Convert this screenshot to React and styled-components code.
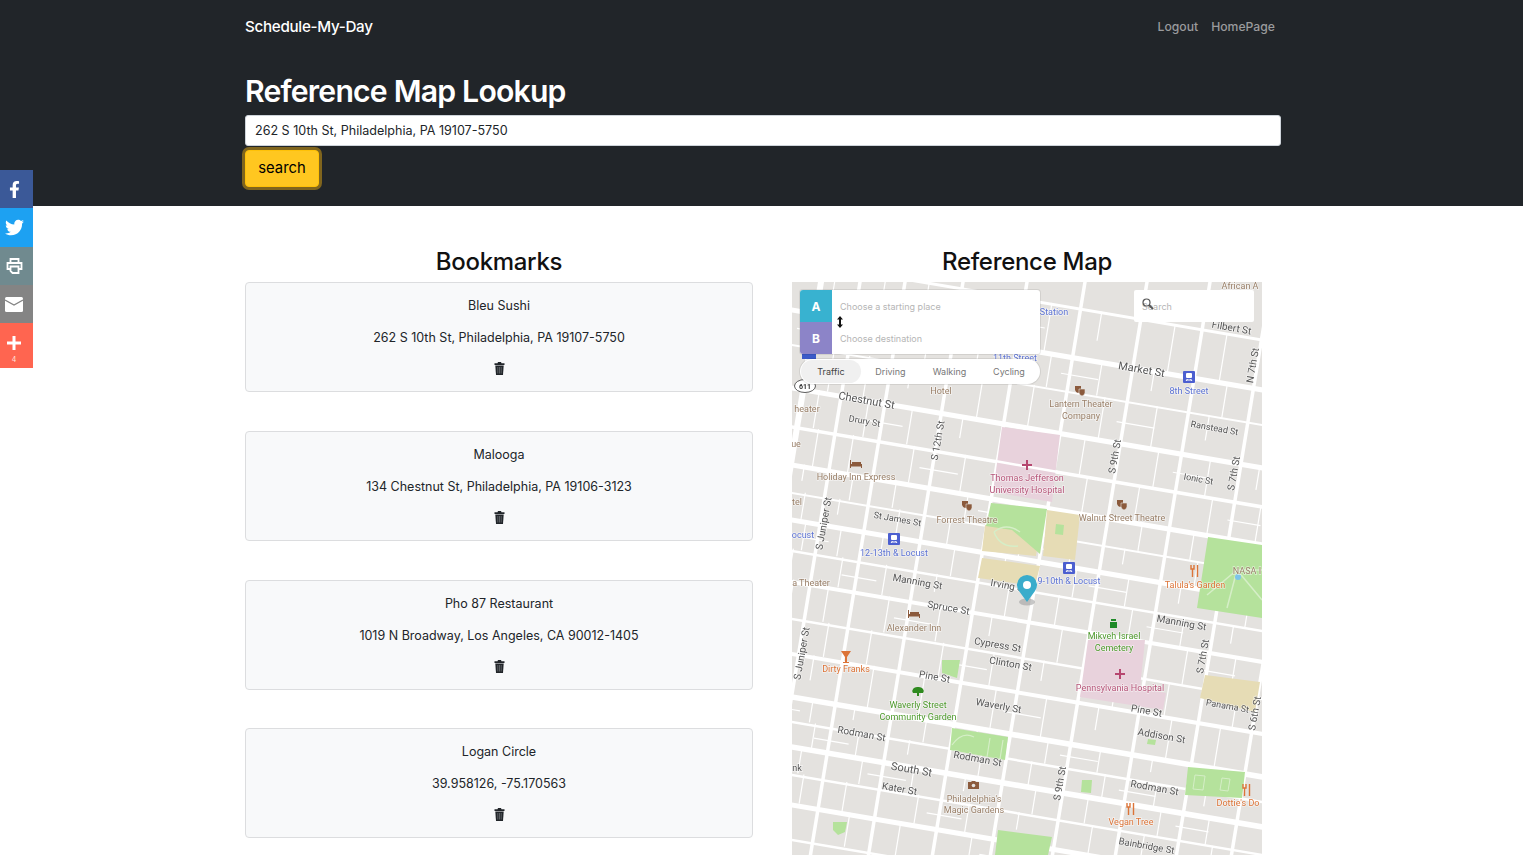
import React from "react";
import styled, {createGlobalStyle} from "styled-components";
import {FaFacebookF, FaTwitter} from "react-icons/fa";

const GlobalStyle = createGlobalStyle`
  html, body {
    margin: 0;
    height: 100%;
    overflow: hidden;
    background: #fff;
    font-family: Inter, "Liberation Sans", sans-serif;
    color: #212529;
  }
`;

const Header = styled.header`
  background: #212529;
  height: 206px;
  padding: 0 242px 0 245px;
  box-sizing: border-box;
`;

const Nav = styled.nav`
  height: 53px;
  display: flex;
  align-items: center;
  justify-content: space-between;
`;

const Brand = styled.div`
  color: #fff;
  font-size: 15.2px;
  font-weight: 500;
  letter-spacing: -0.3px;
`;

const NavLinks = styled.div`
  display: flex;
  gap: 13px;
  margin-right: 6px;
`;

const NavLink = styled.a`
  color: #9a9b9d;
  font-size: 12.2px;
  font-weight: 500;
`;

const Title = styled.h1`
  margin: 19px 0 0;
  color: #fff;
  font-size: 30.2px;
  line-height: 38px;
  font-weight: 600;
  letter-spacing: -0.8px;
`;

const SearchInput = styled.div`
  margin-top: 5px;
  height: 31px;
  box-sizing: border-box;
  background: #fff;
  border: 1px solid #ced4da;
  border-radius: 3px;
  padding: 0 9px 1px;
  display: flex;
  align-items: center;
  font-size: 12.55px;
  color: #212529;
`;

const SearchButton = styled.button`
  display: block;
  margin-top: 4px;
  width: 74px;
  height: 37px;
  background: #ffc720;
  color: #000;
  border: 1px solid #ffc107;
  border-radius: 4px;
  box-shadow: 0 0 0 3px #80651d;
  font-family: inherit;
  font-size: 14.8px;
  padding: 0 0 1px;
`;

const ShareBar = styled.aside`
  position: fixed;
  left: 0;
  top: 170px;
  width: 33px;
  display: flex;
  flex-direction: column;
`;

const ShareItem = styled.div`
  height: ${p => p.$h}px;
  box-sizing: border-box;
  padding-right: 5px;
  background: ${p => p.$bg};
  color: #fff;
  display: flex;
  flex-direction: column;
  align-items: center;
  justify-content: center;
`;

const MoreItem = styled(ShareItem)`
  justify-content: flex-start;
  padding-top: 13px;
`;

const ShareCount = styled.span`
  font-size: 7px;
  line-height: 8px;
  margin-top: 6px;
  color: #ffe3de;
`;

const Main = styled.main`
  display: grid;
  grid-template-columns: 508px 470px;
  column-gap: 39px;
  padding: 40px 0 0 245px;
`;

const Heading = styled.h2`
  margin: 0 0 4px;
  text-align: center;
  font-size: 24px;
  line-height: 32px;
  font-weight: 500;
  letter-spacing: -0.3px;
  color: #111;
`;

const CardList = styled.div`
  display: flex;
  flex-direction: column;
  gap: 38.8px;
`;

const Card = styled.div`
  height: 110px;
  box-sizing: border-box;
  background: #f8f9fa;
  border: 1px solid #dcdddf;
  border-radius: 4px;
  padding: 15px 0 0;
  text-align: center;
  font-size: 12.5px;
  line-height: 16px;
  color: #212529;
`;

const CardLine = styled.div`
  margin-bottom: 16px;
`;

const TrashButton = styled.div`
  height: 14px;
  display: flex;
  justify-content: center;
`;

const MapFrame = styled.div`
  position: relative;
  height: 573px;
  overflow: hidden;
  background: #e4e2df;
`;

const MapDrawing = styled.svg`
  display: block;
  width: 470px;
  height: 573px;
  filter: blur(0.25px);
`;

const RoutePanel = styled.div`
  position: absolute;
  left: 8px;
  top: 8px;
  width: 240px;
  height: 64px;
  background: #fff;
  border-radius: 3px;
  box-shadow: 0 0 0 1px rgba(0,0,0,.08);
  display: grid;
  grid-template-columns: 32px 1fr;
  grid-template-rows: 32px 32px;
  overflow: hidden;
`;

const RouteBadge = styled.div`
  background: ${p => p.$bg};
  color: #fff;
  font-size: 12px;
  font-weight: 700;
  display: flex;
  align-items: center;
  justify-content: center;
`;

const RoutePlaceholder = styled.div`
  padding-left: 8px;
  display: flex;
  align-items: center;
  font-size: 9px;
  color: #b5b5b5;
`;

const SwapIcon = styled.svg`
  position: absolute;
  left: 36px;
  top: 26px;
`;

const ModeTabs = styled.div`
  position: absolute;
  left: 8px;
  top: 77px;
  width: 240px;
  height: 25px;
  background: #fff;
  border-radius: 13px;
  box-shadow: 0 0 0 1px rgba(0,0,0,.08);
  display: grid;
  grid-template-columns: 60px 59px 59px 60px;
  padding: 1px;
  box-sizing: border-box;
`;

const ModeTab = styled.div`
  border-radius: 12px;
  background: ${p => (p.$active ? "#f0f0f0" : "transparent")};
  color: ${p => (p.$active ? "#444" : "#777")};
  font-size: 9px;
  display: flex;
  align-items: center;
  justify-content: center;
`;

const MapSearch = styled.div`
  position: absolute;
  left: 342px;
  top: 8px;
  width: 120px;
  height: 32px;
  background: #fff;
  border-radius: 2px;
  padding-left: 8px;
  box-sizing: border-box;
  display: flex;
  align-items: center;
  font-size: 9px;
  color: #b5b5b5;
`;

const LensIcon = styled.svg`
  position: absolute;
  left: 8px;
  top: 8px;
`;

const bookmarks = [
  {name: "Bleu Sushi", address: "262 S 10th St, Philadelphia, PA 19107-5750"},
  {name: "Malooga", address: "134 Chestnut St, Philadelphia, PA 19106-3123"},
  {name: "Pho 87 Restaurant", address: "1019 N Broadway, Los Angeles, CA 90012-1405"},
  {name: "Logan Circle", address: "39.958126, -75.170563"},
];

function TrashIcon() {
  return (
    <svg width="11" height="13" viewBox="0 0 11 13">
      <path d="M4 0h3l.5 1.2H10.500V3H.5V1.200H3.500z" fill="#212529"/>
      <path d="M1.300 3.500h8.400L9 13H2z" fill="#212529"/>
      <path d="M3.800 5v6.500M5.500 5v6.500M7.200 5v6.500" stroke="#6b6e72" strokeWidth=".8"/>
    </svg>
  );
}

function PrintIcon() {
  return (
    <svg width="17" height="16" viewBox="0 0 17 16" fill="none" stroke="#fff" strokeWidth="1.800">
      <path d="M4.500 4V1h8v3"/>
      <path d="M4 11H1.500V5h14v6H13"/>
      <path d="M4.500 8.500h8V15H6.500l-2-2z"/>
    </svg>
  );
}

function MailIcon() {
  return (
    <svg width="18" height="15" viewBox="0 0 18 15">
      <rect width="18" height="15" rx="1.500" fill="#fff"/>
      <path d="M0 3l9 5 9-5" fill="none" stroke="#848484" strokeWidth="1.300"/>
    </svg>
  );
}

function PlusIcon() {
  return (
    <svg width="14" height="14" viewBox="0 0 14 14">
      <path d="M5.500 0h3v5.500H14v3H8.500V14h-3V8.500H0v-3h5.500z" fill="#fff"/>
    </svg>
  );
}

// map sheet is drawn in page coordinates, the street grid leans by a fixed slope
const EW_SLOPE = 0.17;
const NS_SLOPE = 0.165;
const ewY = (y0, x) => y0 + EW_SLOPE * (x - 792);
const nsX = (x0, y) => x0 - NS_SLOPE * (y - 282);

const ewRoads = [
  [260, 3], [310, 5], [345, 2], [388, 5], [427, 3.5], [465, 5], [493, 2], [520, 5],
  [551, 2.500], [582, 4], [619, 2.500], [654, 4], [697, 5.500], [722, 2.500],
  [747, 5.500], [775, 2.500], [805, 5], [840, 2.500],
];
const nsRoads = [
  [821, 6], [860, 3.500], [905, 3.500], [963, 3.500], [1027, 3.500], [1085, 3.500],
  [1147, 3.500], [1210, 3.500], [1271, 3.500], [1326, 3.500],
];

// short alleys filling the blocks
const alleys = [];
for (let i = 0; i < ewRoads.length - 1; i++) {
  for (let j = 0; j < nsRoads.length - 1; j++) {
    const k = (i * 7 + j * 13) % 5;
    const top = ewRoads[i][0];
    const bottom = ewRoads[i + 1][0];
    const left = nsRoads[j][0];
    const right = nsRoads[j + 1][0];
    const x0 = left + (right - left) * (0.35 + k * 0.07);
    const yStart = ewY(top, nsX(x0, top + 90));
    const yEnd = ewY(bottom, nsX(x0, bottom + 90));
    const len = k === 0 ? 0.6 : 1;
    alleys.push([nsX(x0, yStart), yStart, nsX(x0, yStart + (yEnd - yStart) * len), yStart + (yEnd - yStart) * len]);
    if (k === 2) {
      const mid = top + (bottom - top) * 0.5;
      const xa = nsX(left, mid + 100);
      const xb = xa + (right - left) * 0.6;
      alleys.push([xa, ewY(mid, xa), xb, ewY(mid, xb)]);
    }
  }
}

const areas = [
  ["#e8d2dc", "1002,427 1060,435 1052,502 993,492"],
  ["#e8d2dc", "1088,640 1145,640 1140,688 1166,693 1163,710 1080,697"],
  ["#e6dcb5", "985,525 1040,530 1036,556 982,551"],
  ["#b5e29c", "991,503 1047,509 1040,554 1012,530 986,526"],
  ["#e6dcb5", "1047,510 1080,515 1075,560 1043,556"],
  ["#e6dcb5", "982,558 1040,566 1035,586 978,578"],
  ["#b5e29c", "1208,537 1262,545 1262,618 1197,608"],
  ["#e6dcb5", "1205,675 1260,682 1255,712 1200,698"],
  ["#b5e29c", "942,660 960,660 957,678 942,673"],
  ["#b5e29c", "952,728 1008,737 1005,760 950,750"],
  ["#b5e29c", "1188,767 1245,772 1242,798 1185,795"],
  ["#b5e29c", "1082,780 1092,780 1091,793 1081,792"],
  ["#b5e29c", "998,830 1052,837 1048,855 995,855"],
  ["#b5e29c", "833,822 847,822 845,832 838,835 833,830"],
  ["#b5e29c", "1148,739 1156,740 1155,745 1147,744"],
  ["#b5e29c", "1056,524 1064,525 1063,535 1055,534"],
];

const STREET = "#555";
const BROWN = "#9a8069";
const GREEN = "#4e9a2d";
const BLUE = "#5d73d4";
const ORANGE = "#dc7438";
const PINK = "#b6567a";

const labels = [
  ["Market St", 1141, 373, STREET, 10, 11],
  ["Chestnut St", 866, 404, STREET, 10, 11],
  ["Filbert St", 1231, 331, STREET, 10, 10],
  ["Drury St", 864, 424, STREET, 10, 9],
  ["Ranstead St", 1214, 431, STREET, 10, 9],
  ["Ionic St", 1198, 482, STREET, 10, 9],
  ["St James St", 897, 522, STREET, 10, 9],
  ["Manning St", 917, 585, STREET, 10, 10],
  ["Irving St", 1008, 589, STREET, 10, 10],
  ["Spruce St", 948, 611, STREET, 10, 10],
  ["Manning St", 1181, 626, STREET, 10, 10],
  ["Cypress St", 997, 648, STREET, 10, 10],
  ["Clinton St", 1010, 667, STREET, 10, 10],
  ["Pine St", 934, 680, STREET, 10, 10],
  ["Waverly St", 998, 709, STREET, 10, 10],
  ["Pine St", 1146, 714, STREET, 10, 10],
  ["Panama St", 1227, 709, STREET, 10, 9],
  ["Addison St", 1161, 739, STREET, 10, 10],
  ["Rodman St", 861, 737, STREET, 10, 10],
  ["Rodman St", 977, 762, STREET, 10, 10],
  ["South St", 911, 773, STREET, 10, 11],
  ["Kater St", 899, 792, STREET, 10, 10],
  ["Rodman St", 1154, 791, STREET, 10, 10],
  ["Bainbridge St", 1146, 849, STREET, 10, 9.500],
  ["S 12th St", 941, 441, STREET, -80, 10],
  ["S 9th St", 1118, 457, STREET, -80, 10],
  ["S 7th St", 1237, 474, STREET, -80, 10],
  ["N 7th St", 1256, 366, STREET, -80, 10],
  ["S Juniper St", 827, 524, STREET, -80, 10],
  ["S Juniper St", 805, 654, STREET, -80, 10],
  ["S 7th St", 1206, 657, STREET, -80, 10],
  ["S 6th St", 1258, 714, STREET, -80, 10],
  ["S 9th St", 1063, 784, STREET, -80, 10],
  ["Hotel", 941, 394, BROWN, 0, 9],
  ["Lantern Theater", 1081, 407, BROWN, 0, 9],
  ["Company", 1081, 419, BROWN, 0, 9],
  ["Holiday Inn Express", 856, 480, BROWN, 0, 9],
  ["Forrest Theatre", 967, 523, BROWN, 0, 9],
  ["Walnut Street Theatre", 1122, 521, BROWN, 0, 9],
  ["Alexander Inn", 914, 631, BROWN, 0, 9],
  ["Philadelphia's", 974, 802, BROWN, 0, 9],
  ["Magic Gardens", 974, 813, BROWN, 0, 9],
  ["Thomas Jefferson", 1027, 481, PINK, 0, 9],
  ["University Hospital", 1027, 493, PINK, 0, 9],
  ["Pennsylvania Hospital", 1120, 691, PINK, 0, 9],
  ["8th Street", 1189, 394, BLUE, 0, 9],
  ["12-13th & Locust", 894, 556, BLUE, 0, 9],
  ["9-10th & Locust", 1069, 584, BLUE, 0, 9],
  ["Station", 1054, 315, BLUE, 0, 9],
  ["11th Street", 1015, 361, BLUE, 0, 9],
  ["Waverly Street", 918, 708, GREEN, 0, 9],
  ["Community Garden", 918, 720, GREEN, 0, 9],
  ["Mikveh Israel", 1114, 639, GREEN, 0, 9],
  ["Cemetery", 1114, 651, GREEN, 0, 9],
  ["Talula's Garden", 1195, 588, ORANGE, 0, 9],
  ["Dirty Franks", 846, 672, ORANGE, 0, 9],
  ["Vegan Tree", 1131, 825, ORANGE, 0, 9],
  ["Dottie's Do", 1238, 806, ORANGE, 0, 9],
  ["African A", 1240, 289, BROWN, 0, 9],
  ["NASA I", 1247, 574, BROWN, 0, 9],
  ["heater", 807, 412, BROWN, 0, 9],
  ["a Theater", 811, 586, BROWN, 0, 9],
  ["ocust", 803, 538, BLUE, 0, 9],
  ["tel", 797, 505, BROWN, 0, 9],
  ["ue", 796, 447, BROWN, 0, 9],
  ["nk", 797, 771, STREET, 0, 9],
];

function Station({x, y}) {
  return (
    <g transform={`translate(${x - 6} ${y - 6})`}>
      <rect width="12" height="12" rx="1" fill="#4c5fd0"/>
      <rect x="3" y="2" width="6" height="5" rx="1" fill="#fff"/>
      <path d="M3 10l1.500-2M9 10L7.500 8M3.500 9h5" stroke="#fff" strokeWidth="1"/>
    </g>
  );
}

function Masks({x, y}) {
  return (
    <g transform={`translate(${x - 5} ${y - 5})`} fill="#8b5a3c">
      <path d="M0 0h6v4q-1 3-3 3T0 4z"/>
      <path d="M4 3h6v4q-1 3-3 3T4 7z" stroke="#e4e2df" strokeWidth=".6"/>
    </g>
  );
}

function Bed({x, y}) {
  return (
    <g transform={`translate(${x - 6} ${y - 4})`} fill="#8b5a3c">
      <path d="M0 0h1v4h11v4h-1V6.500H1V8H0z"/>
      <rect x="2" y="2" width="9" height="2"/>
    </g>
  );
}

function Cross({x, y}) {
  return <path d={`M${x - 1} ${y - 5}h2v4h4v2h-4v4h-2v-4h-4v-2h4z`} fill="#b6466f"/>;
}

function Forks({x, y}) {
  return (
    <g transform={`translate(${x - 4} ${y - 6})`} stroke={ORANGE} strokeWidth="1.400" fill="none">
      <path d="M0 0v4h3V0M1.500 4v8M6.500 0v12"/>
    </g>
  );
}

function Pin() {
  return (
    <g>
      <ellipse cx="1027" cy="602" rx="8" ry="3.500" fill="#999" opacity=".55"/>
      <path d="M1027 602l-8-11a10 10 0 1 1 16 0z" fill="#3aaccb"/>
      <circle cx="1027" cy="585" r="4" fill="#fff"/>
    </g>
  );
}

function CityMap() {
  return (
    <MapDrawing viewBox="792 282 470 573">
      <rect x="792" y="282" width="470" height="573" fill="#e4e2df"/>
      {alleys.map(([x1, y1, x2, y2], i) => (
        <line key={i} x1={x1} y1={y1} x2={x2} y2={y2} stroke="#fff" strokeWidth="1.200"/>
      ))}
      {ewRoads.map(([y0, w]) => (
        <line key={y0} x1="780" y1={ewY(y0, 780)} x2="1270" y2={ewY(y0, 1270)} stroke="#fff" strokeWidth={w}/>
      ))}
      {nsRoads.map(([x0, w]) => (
        <line key={x0} x1={nsX(x0, 270)} y1="270" x2={nsX(x0, 870)} y2="870" stroke="#fff" strokeWidth={w}/>
      ))}
      {areas.map(([fill, points]) => <polygon key={points} fill={fill} points={points}/>)}
      <line x1="995" y1="461" x2="1058" y2="472" stroke="#fff" strokeWidth="2.500"/>
      <path d="M1020 532q-14-10-26 0M994 532q6 16 24 14" fill="none" stroke="#d5eec7" strokeWidth="1.500"/>
      <path d="M1262 570l-25 0-30 25M1237 570l-10 38M1237 570l25 30" fill="none" stroke="#d5eec7" strokeWidth="1.500"/>
      <path d="M952 745q10-14 22-8M990 738l-3 19M1003 740l-3 19" fill="none" stroke="#d5eec7" strokeWidth="1.200"/>
      <path d="M1195 775l-2 14 10 1 2-14zM1222 778l-2 12 8 1 2-12z" fill="none" stroke="#d5eec7" strokeWidth="1"/>
      <circle cx="1238" cy="577" r="3" fill="#7cc4ea"/>
      <Station x={1189} y={377}/>
      <Station x={894} y={539}/>
      <Station x={1069} y={568}/>
      <Masks x={1080} y={391}/>
      <Masks x={967} y={506}/>
      <Masks x={1122} y={505}/>
      <Bed x={856} y={464}/>
      <Bed x={914} y={614}/>
      <Cross x={1027} y={465}/>
      <Cross x={1120} y={674}/>
      <Forks x={1195} y={571}/>
      <Forks x={1131} y={809}/>
      <Forks x={1247} y={790}/>
      <path d="M841 651h10l-4 6v5h2v1h-6v-1h2v-5z" fill={ORANGE}/>
      <path d="M918 687a5 4 0 0 1 5 6h-4v3h-2v-3h-4a5 4 0 0 1 5-6z" fill="#2f8a1f"/>
      <path d="M1110 622h7v6h-7zM1111 619h5v2h-5z" fill="#1f8a28"/>
      <path d="M968 782h3l1-1h3l1 1h3v7h-11z" fill="#8b5a3c"/>
      <circle cx="973.500" cy="785.500" r="1.800" fill="#e4e2df"/>
      <ellipse cx="805" cy="386" rx="10.500" ry="6.500" fill="#fff" stroke="#333" strokeWidth=".8"/>
      <path d="M802 351h14v8h-14z" fill="#3b5ac8"/>
      {labels.map(([text, x, y, color, angle, size], i) => (
        <text
          key={i}
          x={x}
          y={y}
          fontSize={size}
          fill={color}
          textAnchor="middle"
          fontFamily="Roboto, 'Liberation Sans', sans-serif"
          stroke="#fff"
          strokeWidth="1.500"
          strokeOpacity=".55"
          paintOrder="stroke"
          transform={angle ? `rotate(${angle} ${x} ${y})` : undefined}
        >
          {text}
        </text>
      ))}
      <text x="805" y="389" fontSize="7" fontWeight="700" fill="#333" textAnchor="middle" fontFamily="Roboto, sans-serif">611</text>
      <Pin/>
    </MapDrawing>
  );
}

export default function App() {
  return (
    <>
      <GlobalStyle/>
      <Header>
        <Nav>
          <Brand>Schedule-My-Day</Brand>
          <NavLinks>
            <NavLink>Logout</NavLink>
            <NavLink>HomePage</NavLink>
          </NavLinks>
        </Nav>
        <Title>Reference Map Lookup</Title>
        <SearchInput>262 S 10th St, Philadelphia, PA 19107-5750</SearchInput>
        <SearchButton>search</SearchButton>
      </Header>
      <ShareBar>
        <ShareItem $h={38} $bg="#3b5998"><FaFacebookF size={17}/></ShareItem>
        <ShareItem $h={39} $bg="#1da1f2"><FaTwitter size={19}/></ShareItem>
        <ShareItem $h={38} $bg="#708a8f"><PrintIcon/></ShareItem>
        <ShareItem $h={38} $bg="#848484"><MailIcon/></ShareItem>
        <MoreItem $h={45} $bg="#ff6550"><PlusIcon/><ShareCount>4</ShareCount></MoreItem>
      </ShareBar>
      <Main>
        <section>
          <Heading>Bookmarks</Heading>
          <CardList>
            {bookmarks.map(b => (
              <Card key={b.name}>
                <CardLine>{b.name}</CardLine>
                <CardLine>{b.address}</CardLine>
                <TrashButton><TrashIcon/></TrashButton>
              </Card>
            ))}
          </CardList>
        </section>
        <section>
          <Heading>Reference Map</Heading>
          <MapFrame>
            <CityMap/>
            <RoutePanel>
              <RouteBadge $bg="#38b2d0">A</RouteBadge>
              <RoutePlaceholder>Choose a starting place</RoutePlaceholder>
              <RouteBadge $bg="#8c84c8">B</RouteBadge>
              <RoutePlaceholder>Choose destination</RoutePlaceholder>
              <SwapIcon width="8" height="12" viewBox="0 0 8 12">
                <path d="M4 0l3 3.500H5v5h2L4 12 1 8.500h2v-5H1z" fill="#111"/>
              </SwapIcon>
            </RoutePanel>
            <ModeTabs>
              <ModeTab $active>Traffic</ModeTab>
              <ModeTab>Driving</ModeTab>
              <ModeTab>Walking</ModeTab>
              <ModeTab>Cycling</ModeTab>
            </ModeTabs>
            <MapSearch>
              Search
              <LensIcon width="12" height="12" viewBox="0 0 12 12" fill="none" stroke="#555">
                <circle cx="4.500" cy="4.500" r="3.500" strokeWidth="1.200"/>
                <path d="M7 7l4 4" strokeWidth="1.800"/>
              </LensIcon>
            </MapSearch>
          </MapFrame>
        </section>
      </Main>
    </>
  );
}
